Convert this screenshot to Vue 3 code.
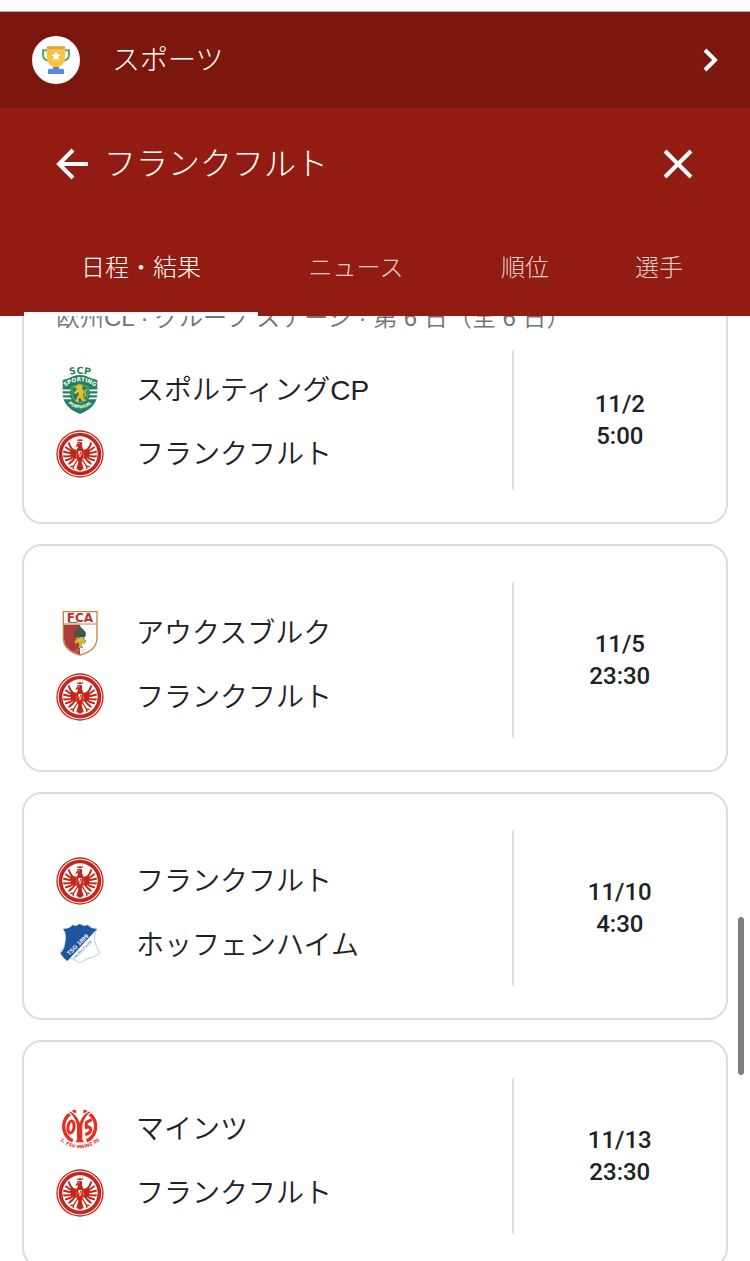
<script setup>
import { ref, onMounted } from "vue";

const tabs = ["日程・結果", "ニュース", "順位", "選手"];
const activeTab = ref(0);
const list = ref(null);

const matches = [
  {
    stage: "欧州CL · グループ ステージ · 第 6 日（全 6 日）",
    teams: [
      { name: "スポルティングCP", crest: "sporting" },
      { name: "フランクフルト", crest: "frankfurt" },
    ],
    date: "11/2",
    time: "5:00",
  },
  {
    teams: [
      { name: "アウクスブルク", crest: "augsburg" },
      { name: "フランクフルト", crest: "frankfurt" },
    ],
    date: "11/5",
    time: "23:30",
  },
  {
    teams: [
      { name: "フランクフルト", crest: "frankfurt" },
      { name: "ホッフェンハイム", crest: "hoffenheim" },
    ],
    date: "11/10",
    time: "4:30",
  },
  {
    teams: [
      { name: "マインツ", crest: "mainz" },
      { name: "フランクフルト", crest: "frankfurt" },
    ],
    date: "11/13",
    time: "23:30",
  },
];

onMounted(() => {
  list.value.scrollTop = 56;
});
</script>

<template>
  <svg class="sprite" aria-hidden="true">
    <symbol id="frankfurt" viewBox="0 0 144 144">
      <circle cx="72" cy="72" r="71" fill="#c4261a" />
      <circle cx="72" cy="72" r="67" fill="#fff" />
      <circle cx="72" cy="72" r="64" fill="#c4261a" />
      <circle cx="72" cy="72" r="53" fill="#fff" />
      <g fill="#c4261a">
        <path d="M62 26l5 4 5-4 5 4 5-4-3 7H65z" />
        <path d="M64 37q8-4 15 1l-1 8q0 7 5 13l-3 31-5 9h-6l-6-11-2-29q6-4 5-10l-8 1q2-4 6-9z" />
        <path d="M68 94h8l7 22-11 7-11-7z" />
        <path d="M62 60L50 56 42 66l4 14 16 8zM82 60l12-4 8 10-4 14-16 8z" />
      </g>
      <g fill="none" stroke="#c4261a" stroke-width="6" stroke-linecap="round">
        <path d="M58 66Q43 56 39 40M52 66Q36 58 30 52M50 70Q36 68 24 65M50 76Q38 80 24 79M52 80Q42 90 30 91M56 84Q50 94 40 101" />
        <path d="M86 66q15-10 19-26M92 66q16-8 22-14M94 70q14-2 26-5M94 76q12 4 26 3M92 80q10 10 22 11M88 84q6 10 16 17" />
      </g>
      <path d="M64 90L53 108l-10 2m10-2l-2 9M80 90l11 18 10 2m-10-2l2 9" fill="none" stroke="#c4261a" stroke-width="4" />
      <path d="M67 63h10l-1 11-4 9-4-9z" fill="#fff" />
      <path d="M74 66l-3 11" stroke="#c4261a" stroke-width="3" />
      <path d="M67 41h4" stroke="#fff" stroke-width="2" fill="none" />
    </symbol>

    <symbol id="sporting" viewBox="0 0 144 144">
      <path id="scp-arc" d="M32 30Q71 16 112 30" fill="none" />
      <path id="sporting-arc" d="M22 66Q71 26 122 66" fill="none" />
      <path id="portugal-arc" d="M32 108Q71 146 112 108" fill="none" />
      <path d="M20 42Q40 38 53 30Q71 24 90 30Q103 38 124 42V80Q124 124 72 144Q20 124 20 80z" fill="#26815a" />
      <text font-size="28" font-weight="700" fill="#26815a" text-anchor="middle" class="crest-text">
        <textPath href="#scp-arc" startOffset="50%">SCP</textPath>
      </text>
      <path d="M20 73h104M20 85h104M22 97h100" stroke="#fff" stroke-width="5" />
      <ellipse cx="72" cy="83" rx="30" ry="33" fill="#26815a" />
      <path d="M48 62q12-2 24-8 12 6 24 8v22q0 18-24 28-24-10-24-28z" fill="none" stroke="#8dbda6" stroke-width="2" />
      <g fill="#e4bd32">
        <path d="M64 57l9-2 7 6-1 8 6 8-4 11 3 10 7 6-12 1-7-10-5 4 2 8-11 1 2-7 4-9 5-6-2-7-9 5-5-4 8-8 3-6-7 1-2-5 8-2z" />
        <path d="M83 91q8 0 5-9t4-13" fill="none" stroke="#e4bd32" stroke-width="4" />
      </g>
      <text font-size="17" font-weight="700" fill="#fff" text-anchor="middle" class="crest-text">
        <textPath href="#sporting-arc" startOffset="50%">SPORTING</textPath>
      </text>
      <text font-size="13" font-weight="700" fill="#fff" text-anchor="middle" class="crest-text">
        <textPath href="#portugal-arc" startOffset="50%">PORTUGAL</textPath>
      </text>
    </symbol>

    <symbol id="augsburg" viewBox="0 0 144 144">
      <path d="M22 8h101v80q-1 38-51 50Q23 126 22 88z" fill="#fff" stroke="#c8833d" stroke-width="4" />
      <path d="M24 47h48v89Q25 124 24 88z" fill="#ad3b37" />
      <path d="M22 45h101" stroke="#c8833d" stroke-width="3" />
      <text x="72" y="38" font-size="36" font-weight="700" fill="#b9342e" text-anchor="middle" class="crest-text">FCA</text>
      <path d="M37 40h28" stroke="#37805b" stroke-width="3" />
      <path d="M72 50q4 8 11 12 11 11 4 22H58q-8-11 3-22 9-5 11-12z" fill="#36594a" />
      <path d="M60 65l23 18M57 73l17 11M67 60l20 17M84 64L61 83M76 60L56 77" stroke="#55705a" stroke-width="1" />
      <path d="M59 86h27l-3 7 7 2-5 9-8-4-1 9 4 7H66l4-7-3-9-8 5-4-9 7-3z" fill="#e0bd3f" stroke="#9b7135" stroke-width="2" />
      <text x="63" y="130" font-size="11" fill="#fff" text-anchor="middle" class="crest-text">19</text>
      <text x="82" y="130" font-size="11" fill="#ad3b37" text-anchor="middle" class="crest-text">07</text>
    </symbol>

    <symbol id="hoffenheim" viewBox="0 0 144 144">
      <path d="M22 24q20 0 28-12 10 8 21-3 14 11 24 3 9 12 28 12-12 20-5 41 4 18 14 30-13 12-27 15-16 2-33 17-15-14-31-16-15-3-28-17 13-14 15-31 6-23-6-39z" fill="#fff" stroke="#91add0" stroke-width="2" />
      <path d="M22 24q20 0 28-12 10 8 21-3 14 11 24 3 9 12 28 12L34 120q-13-9-21-23 13-12 15-32 6-25-6-41z" fill="#2054a0" />
      <g transform="translate(65 71) rotate(-45)">
        <text x="0" y="6" font-size="18" font-weight="700" fill="#fff" text-anchor="middle" class="crest-text crest-text--narrow">TSG 1899</text>
        <text x="0" y="25" font-size="14" fill="#477bb8" text-anchor="middle" class="crest-text crest-text--narrow">Hoffenheim</text>
      </g>
    </symbol>

    <symbol id="mainz" viewBox="0 0 144 144">
      <path d="M60 18A48 48 0 0 0 50 108M82 18A48 48 0 0 1 92 108" fill="none" stroke="#e52e22" stroke-width="10" />
      <path d="M30 18h14q20 12 27 30 7-18 27-30h14Q88 30 81 60v44l8 10H53l8-10V60Q54 30 30 18z" fill="#e52e22" stroke="#fff" stroke-width="4" />
      <ellipse cx="45" cy="66" rx="9" ry="18" fill="none" stroke="#e52e22" stroke-width="9" transform="rotate(8 45 66)" />
      <path d="M107 44L91 52v15q15-4 13 9-2 9-16 13" fill="none" stroke="#e52e22" stroke-width="9" />
      <path id="mainz-arc" d="M9 104Q70 156 135 104" fill="none" />
      <text font-size="14" font-weight="700" fill="#e52e22" text-anchor="middle" class="crest-text">
        <textPath href="#mainz-arc" startOffset="50%">1. FSV MAINZ 05</textPath>
      </text>
    </symbol>
  </svg>

  <div class="page">
    <a class="sports" href="#">
      <svg class="sports__icon" viewBox="0 0 144 144" aria-hidden="true">
        <circle cx="72" cy="72" r="72" fill="#fff" />
        <path d="M47 43H33v13q0 16 18 18M97 43h14v13q0 16-18 18" fill="none" stroke="#58ad63" stroke-width="6" />
        <path d="M45 31h54v39q0 13-18 22v5H63v-5Q45 83 45 70z" fill="#f6c244" />
        <path d="M45 31h54v8H45z" fill="#e6a33d" />
        <path d="M63 93h18v6H63z" fill="#df5845" />
        <path d="M53 98h38q5 0 5 5v11H48v-11q0-5 5-5z" fill="#5387ed" />
        <path d="M72 46l4 9 10 1-8 7 3 10-9-5-9 5 3-10-8-7 10-1z" fill="#fff" />
      </svg>
      <span class="sports__label">スポーツ</span>
      <svg class="sports__chevron" viewBox="0 0 16 24" aria-hidden="true">
        <path d="M2 2l10 10L2 22" fill="none" stroke="#fff" stroke-width="4" />
      </svg>
    </a>

    <header class="header">
      <div class="header__bar">
        <button class="icon-button" type="button" aria-label="戻る">
          <svg width="32" height="32" viewBox="0 0 32 32">
            <path d="M17 2L3 16l14 14M3 16h29" fill="none" stroke="#fff" stroke-width="4" />
          </svg>
        </button>
        <h1 class="header__title">フランクフルト</h1>
        <button class="icon-button" type="button" aria-label="閉じる">
          <svg width="32" height="32" viewBox="0 0 32 32">
            <path d="M3 3l26 26M29 3L3 29" fill="none" stroke="#fff" stroke-width="4" />
          </svg>
        </button>
      </div>
      <nav class="tabs">
        <button
          v-for="(tab, index) in tabs"
          :key="tab"
          class="tabs__item"
          :class="{ 'tabs__item--active': index === activeTab }"
          type="button"
          @click="activeTab = index"
        >
          {{ tab }}
        </button>
      </nav>
    </header>

    <main ref="list" class="matches">
      <article
        v-for="match in matches"
        :key="match.date"
        class="match"
        :class="{ 'match--staged': match.stage }"
      >
        <p v-if="match.stage" class="match__stage">{{ match.stage }}</p>
        <div class="match__body">
          <div class="match__teams">
            <div v-for="team in match.teams" :key="team.name" class="team">
              <svg class="team__crest" aria-hidden="true">
                <use :href="'#' + team.crest" />
              </svg>
              <span class="team__name">{{ team.name }}</span>
            </div>
          </div>
          <div class="match__time">
            <span>{{ match.date }}</span>
            <span>{{ match.time }}</span>
          </div>
        </div>
      </article>
    </main>
    <div class="scroll-thumb"></div>
  </div>
</template>

<style>
body {
  margin: 0;
  background: #fff;
}
</style>

<style scoped>
.sprite {
  display: none;
}

.crest-text {
  font-family: "DejaVu Sans", sans-serif;
}

.crest-text--narrow {
  font-family: "Liberation Sans", sans-serif;
}

.page {
  position: relative;
  display: flex;
  flex-direction: column;
  box-sizing: border-box;
  height: 100vh;
  padding-top: 11px;
  overflow: hidden;
  color: #202124;
  font-family: "Liberation Sans", "Noto Sans CJK JP", sans-serif;
  font-weight: 350;
}

.sports {
  display: flex;
  flex-shrink: 0;
  align-items: center;
  height: 96px;
  padding: 0 31px 0 32px;
  border-top: 1px solid #b5b5b5;
  background: #7c170d;
  color: #fff;
  font-size: 28px;
  font-weight: 300;
  line-height: 40px;
  text-decoration: none;
}

.sports__icon {
  width: 48px;
  height: 48px;
}

.sports__label {
  flex: 1;
  margin-left: 32px;
  padding-top: 2px;
}

.sports__chevron {
  width: 16px;
  height: 24px;
}

.header {
  flex-shrink: 0;
  background: #921c12;
  color: #fff;
}

.header__bar {
  display: flex;
  align-items: center;
  height: 112px;
  padding: 0 56px;
}

.header__title {
  flex: 1;
  margin: 0 0 0 16px;
  font-size: 32px;
  font-weight: 300;
  line-height: 48px;
}

.icon-button {
  display: flex;
  padding: 0;
  border: 0;
  background: none;
  cursor: pointer;
}

.tabs {
  display: grid;
  grid-template-columns: 117fr 98fr 71fr 63fr;
  height: 96px;
  padding: 0 28px 0 24px;
}

.tabs__item {
  padding: 4px 0 0;
  border: 0;
  border-bottom: 4px solid transparent;
  background: none;
  color: rgba(255, 255, 255, 0.8);
  font: inherit;
  font-size: 24px;
  font-weight: 300;
  line-height: 32px;
  white-space: nowrap;
  cursor: pointer;
}

.tabs__item--active {
  border-bottom-color: #fff;
  color: #fff;
}

.matches {
  display: flex;
  flex: 1;
  flex-direction: column;
  gap: 20px;
  min-height: 0;
  padding: 20px 22px;
  overflow-y: auto;
  scrollbar-width: none;
}

.match {
  flex-shrink: 0;
  padding: 36px 0 32px 32px;
  border: 2px solid #dadce0;
  border-radius: 20px;
}

.match--staged {
  padding-top: 20px;
}

.match__stage {
  margin: 0 0 16px;
  color: #70757a;
  font-size: 24px;
  line-height: 32px;
  white-space: nowrap;
}

.match__body {
  display: flex;
}

.match__teams {
  display: flex;
  flex: 1;
  flex-direction: column;
  gap: 16px;
  padding: 27px 0 17px;
}

.match--staged .match__teams {
  padding: 16px 0 12px;
}

.team {
  display: flex;
  align-items: center;
  gap: 32px;
  height: 48px;
  font-size: 28px;
  line-height: 40px;
}

.team__crest {
  width: 48px;
  height: 48px;
}

.team__name {
  padding-top: 2px;
}

.match__time {
  display: flex;
  flex-direction: column;
  justify-content: center;
  box-sizing: border-box;
  width: 32%;
  border-left: 2px solid #dadce0;
  font-family: Roboto, "Liberation Sans", sans-serif;
  font-size: 24px;
  font-weight: 500;
  line-height: 32px;
  text-align: center;
}

.scroll-thumb {
  position: absolute;
  top: 917px;
  right: 6px;
  width: 6px;
  height: 158px;
  border-radius: 3px;
  background: #7f7f7f;
}
</style>
